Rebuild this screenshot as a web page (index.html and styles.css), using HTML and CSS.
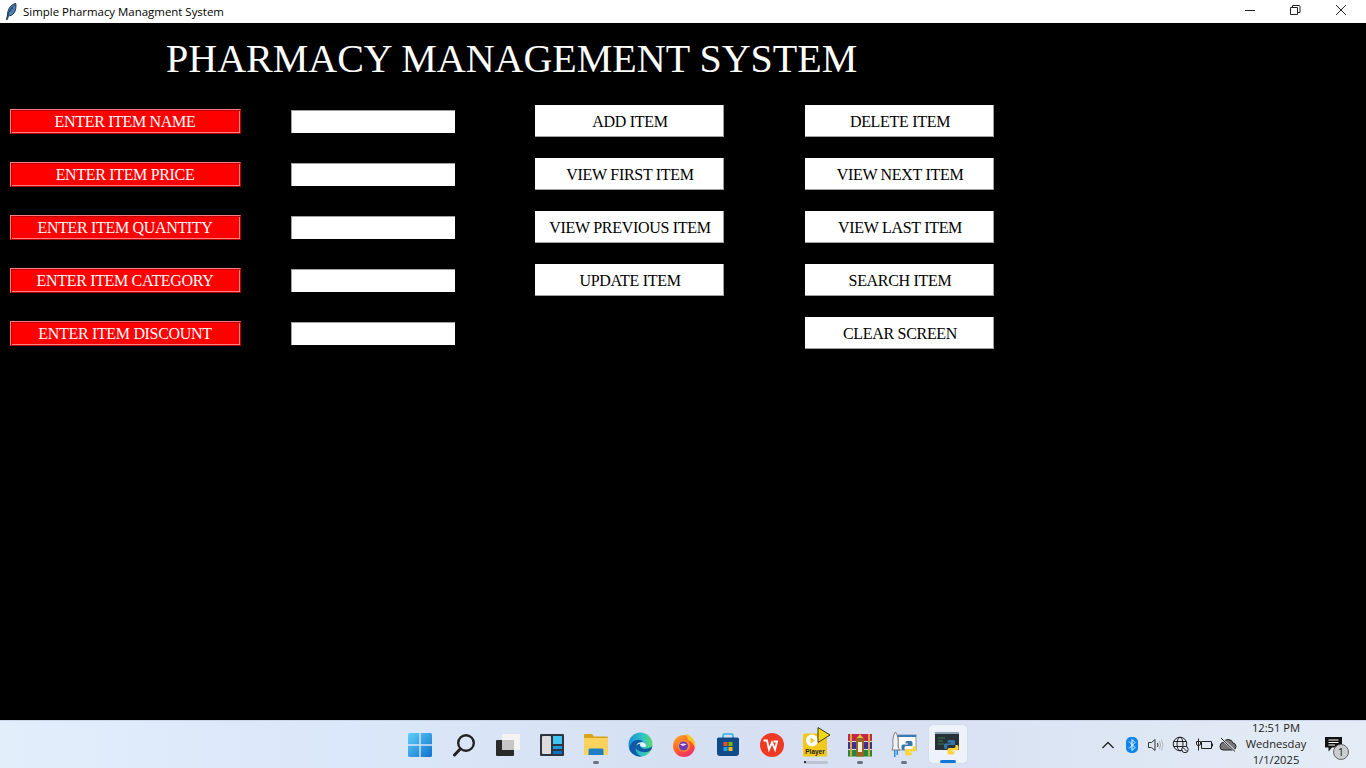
FILE: index.html
```html
<!DOCTYPE html>
<html lang="en">
<head>
    <meta charset="UTF-8">
    <title>Simple Pharmacy Managment System</title>
    <link rel="stylesheet" href="styles.css">
</head>
<body>
<div class="titlebar">
    <svg class="feather" width="12" height="17" viewBox="0 0 12 17">
        <path d="M1.500 16.500L2.500 12C2.500 8 4 4.500 6.500 2.500C8 1.200 9.500 .7 10.800 .5C11.300 4 10.800 7.500 9 10C7.500 12 5.500 13 3.500 12.800L2.300 16.500Z" fill="#4f86bd" stroke="#10233a" stroke-width=".9"/>
        <path d="M3 12.500C4 8.500 6 5 9.800 1.800M5 6.500L7 8.500M6.500 4.500L8.500 6.500" fill="none" stroke="#10233a" stroke-width=".7"/>
    </svg>
    <span class="titlebar-text">Simple Pharmacy Managment System</span>
    <div class="window-controls">
        <svg width="46" height="23" viewBox="0 0 46 23"><path d="M17 10.500H27" stroke="#222" fill="none"/></svg>
        <svg width="46" height="23" viewBox="0 0 46 23"><path d="M16.500 7.500H23.500V14.500H16.500Z M18.500 7.500V5.500H25Q26 5.500 26 6.500V12.500H23.500" stroke="#222" fill="none"/></svg>
        <svg width="46" height="23" viewBox="0 0 46 23"><path d="M16 5L26 15M26 5L16 15" stroke="#222" fill="none"/></svg>
    </div>
</div>

<main class="app">
    <h1 class="app-title">PHARMACY MANAGEMENT SYSTEM</h1>
    <form class="item-form">
        <label class="field-label">ENTER ITEM NAME</label>
        <input class="field-input" type="text">
        <button type="button" class="action-btn">ADD ITEM</button>
        <button type="button" class="action-btn">DELETE ITEM</button>

        <label class="field-label">ENTER ITEM PRICE</label>
        <input class="field-input" type="text">
        <button type="button" class="action-btn">VIEW FIRST ITEM</button>
        <button type="button" class="action-btn">VIEW NEXT ITEM</button>

        <label class="field-label">ENTER ITEM QUANTITY</label>
        <input class="field-input" type="text">
        <button type="button" class="action-btn">VIEW PREVIOUS ITEM</button>
        <button type="button" class="action-btn">VIEW LAST ITEM</button>

        <label class="field-label">ENTER ITEM CATEGORY</label>
        <input class="field-input" type="text">
        <button type="button" class="action-btn">UPDATE ITEM</button>
        <button type="button" class="action-btn">SEARCH ITEM</button>

        <label class="field-label">ENTER ITEM DISCOUNT</label>
        <input class="field-input" type="text">
        <span></span>
        <button type="button" class="action-btn">CLEAR SCREEN</button>
    </form>
</main>

<footer class="taskbar">
    <div class="taskbar-apps">
        <div class="task-slot">
            <svg width="24" height="24" viewBox="0 0 24 24">
                <defs>
                    <linearGradient id="winGrad" x1="0" y1="0" x2="1" y2="1"><stop offset="0" stop-color="#5fd0fb"/><stop offset="1" stop-color="#0f70cf"/></linearGradient>
                </defs>
                <path d="M0 1.500Q0 0 1.500 0H11.300V11.300H0Z M12.700 0H22.500Q24 0 24 1.500V11.300H12.700Z M0 12.700H11.300V24H1.500Q0 24 0 22.500Z M12.700 12.700H24V22.500Q24 24 22.500 24H12.700Z" fill="url(#winGrad)"/>
            </svg>
        </div>
        <div class="task-slot">
            <svg width="24" height="24" viewBox="0 0 24 24">
                <circle cx="14" cy="10" r="7.800" fill="none" stroke="#222" stroke-width="2.400"/>
                <path d="M8.200 16L2.500 22" stroke="#222" stroke-width="3" stroke-linecap="round"/>
            </svg>
        </div>
        <div class="task-slot">
            <svg width="24" height="24" viewBox="0 0 24 24">
                <rect x="6" y="1" width="18" height="16" fill="#f4f4f4"/>
                <rect x="0" y="7" width="18" height="16" rx="1" fill="#2a2a2a"/>
                <rect x="6" y="7" width="12" height="10" fill="#c6c6c6"/>
            </svg>
        </div>
        <div class="task-slot">
            <svg width="24" height="24" viewBox="0 0 24 24">
                <rect x="0" y="1" width="24" height="22" rx="1" fill="#2d3540"/>
                <rect x="2" y="3" width="9" height="18" rx="1" fill="#dcdcdc"/>
                <rect x="13" y="3" width="9" height="8" fill="#41c4f5"/>
                <rect x="13" y="13" width="9" height="3" fill="#1d9ae0"/>
                <rect x="13" y="18" width="9" height="3" fill="#0f6fc0"/>
            </svg>
        </div>
        <div class="task-slot">
            <svg width="26" height="24" viewBox="0 0 26 24">
                <path d="M1 2Q1 1 2 1H9L11 3.500H24Q25 3.500 25 4.500V8H1Z" fill="#d9a21b"/>
                <rect x="1" y="5" width="24" height="17" fill="#fbd35c"/>
                <path d="M5.500 22V17Q5.500 15.500 7 15.500H19Q20.500 15.500 20.500 17V22Z" fill="#1f7fc4"/>
            </svg>
            <i class="run-dot"></i>
        </div>
        <div class="task-slot">
            <svg width="25" height="25" viewBox="0 0 25 25">
                <defs>
                    <linearGradient id="edgeGrad" x1="0" y1="0" x2="1" y2="0"><stop offset="0" stop-color="#1d8fd6"/><stop offset=".6" stop-color="#30c3c6"/><stop offset="1" stop-color="#62d86a"/></linearGradient>
                </defs>
                <circle cx="12.500" cy="12.500" r="12" fill="url(#edgeGrad)"/>
                <path d="M24.500 14C21 17 15 18 12.500 15C11 13 12 10.500 15 10C13 7 8 7 4.500 10C2 12.500 1 15 1.500 18C4 23 10 25 14 24.500C9 23 7 19 8 16C10 20 18 22 23 18Z" fill="#0d5ba6"/>
                <path d="M8 14C9 10 14 9 17 11.500C19 13.500 18 15 16 15C13 15 11 13 12.500 11.500C10 12 8.500 13 8 14Z" fill="#e8f3fb"/>
            </svg>
        </div>
        <div class="task-slot">
            <svg width="24" height="24" viewBox="0 0 24 24">
                <defs>
                    <linearGradient id="foxGrad" x1="0" y1="0" x2=".6" y2="1"><stop offset="0" stop-color="#ffb21f"/><stop offset=".6" stop-color="#ff5a2c"/><stop offset="1" stop-color="#f0306a"/></linearGradient>
                </defs>
                <circle cx="12" cy="13" r="11" fill="url(#foxGrad)"/>
                <path d="M14 .5C20 3 24.500 9 23 15C22 11 19 8 16 7Z" fill="#ffc524"/>
                <path d="M6 8C9 5 14 6 17 9C18.500 12 18 16 15 18C12 19.500 8 18.500 6.500 16C5.500 13 5 10 6 8Z" fill="#ff8a2b"/>
                <circle cx="11.500" cy="13" r="4.500" fill="#6a3bb8"/>
                <path d="M8 11.500C10 10 13 10 14.500 11.500L11 13Z" fill="#f3d8ff"/>
            </svg>
        </div>
        <div class="task-slot">
            <svg width="24" height="24" viewBox="0 0 24 24">
                <path d="M7 5V2.500Q7 1 8.500 1H15.500Q17 1 17 2.500V5" fill="none" stroke="#2dade8" stroke-width="1.600"/>
                <path d="M1 6Q1 4.500 2.500 4.500H21.500Q23 4.500 23 6V20Q23 23 20 23H4Q1 23 1 20Z" fill="#114a8a"/>
                <rect x="7.500" y="9" width="4" height="4" fill="#f04f23"/>
                <rect x="12.500" y="9" width="4" height="4" fill="#7fba00"/>
                <rect x="7.500" y="14" width="4" height="4" fill="#20a4ef"/>
                <rect x="12.500" y="14" width="4" height="4" fill="#ffb900"/>
            </svg>
        </div>
        <div class="task-slot">
            <svg width="24" height="24" viewBox="0 0 24 24">
                <circle cx="12" cy="12" r="12" fill="#ee3a24"/>
                <path d="M3.500 7.500H7L9 16.500L12 9.500L15 16.500L17 8.500H13.500" fill="none" stroke="#fff" stroke-width="1.900"/>
            </svg>
        </div>
        <div class="task-slot">
            <svg width="30" height="36" viewBox="0 0 30 36">
                <rect x="2" y="6.500" width="24" height="23" rx="1.500" fill="#f2c81e"/>
                <circle cx="11" cy="13.500" r="6" fill="#fff"/>
                <path d="M9.500 10.500L14 13.500L9.500 16.500Z" fill="#f2c81e"/>
                <path d="M17 .5L29 8L17 15.500Z" fill="#f2d716" stroke="#3a3a1a" stroke-width="1"/>
                <text x="14" y="27" class="player-text">Player</text>
            </svg>
            <i class="run-dot run-dot-wide"></i>
        </div>
        <div class="task-slot">
            <svg width="24" height="24" viewBox="0 0 24 24">
                <rect x="0" y="1" width="24" height="7" fill="#c2274a"/>
                <rect x="0" y="9" width="24" height="7" fill="#3e2f9c"/>
                <rect x="0" y="17" width="24" height="6.500" fill="#1e8a3e"/>
                <rect x="2" y="1" width="2" height="22.500" fill="#d8a83a"/>
                <rect x="20" y="1" width="2" height="22.500" fill="#d8a83a"/>
                <rect x="8" y="4" width="8" height="19.500" fill="#9a6420"/>
                <rect x="10" y="9" width="4" height="10" fill="#f1ece0"/>
                <path d="M9 5L12 1L15 5Z" fill="#f0c040"/>
            </svg>
            <i class="run-dot"></i>
        </div>
        <div class="task-slot">
            <svg width="26" height="28" viewBox="0 0 26 28">
                <rect x="7" y="4" width="18" height="15" fill="#fff" stroke="#7d95ad"/>
                <rect x="7" y="4" width="18" height="2" fill="#3b7ab5"/>
                <path d="M4.500 1C7 4 7.500 9 7 15L8.500 19H1L2 15C1.500 9 2 4 4.500 1Z" fill="#f1f1f1" stroke="#666" stroke-width=".8"/>
                <rect x="3" y="19" width="1.500" height="7" fill="#2a8ae0"/>
                <rect x="5.500" y="19" width="1.500" height="5" fill="#2a8ae0"/>
                <path d="M16 10H20Q21.500 10 21.500 11.500V15H15Q13.500 15 13.500 16.500V19H12Q10.500 19 10.500 17V15Q10.500 13.500 12 13.500H17V12.500H14.500V11.500Q14.500 10 16 10Z" fill="#3776ab"/>
                <path d="M22 15H23.500Q25 15 25 17V19Q25 20.500 23.500 20.500H18.500V21.500H21V23Q21 24.500 19.500 24.500H15.500Q14 24.500 14 23V19.500Q14 18 15.500 18H20.500Q22 18 22 16.500Z" fill="#ffd43b"/>
            </svg>
            <i class="run-dot"></i>
        </div>
        <div class="task-slot task-active">
            <svg width="26" height="26" viewBox="0 0 26 26">
                <rect x="0" y="1" width="24" height="18" fill="#263238"/>
                <rect x="0" y="1" width="24" height="2" fill="#8ea2b5"/>
                <path d="M3 7H10M3 10H8M3 13H9" stroke="#3f7d4a" stroke-width="1.200"/>
                <path d="M14 9H18.500Q20 9 20 10.500V14H13.500Q12 14 12 15.500V18H10.500Q9 18 9 16V14Q9 12.500 10.500 12.500H15.500V11.500H12.500V10.500Q12.500 9 14 9Z" fill="#3776ab"/>
                <path d="M20.500 14H22Q23.500 14 23.500 16V18Q23.500 19.500 22 19.500H17V20.500H19.500V22Q19.500 23.500 18 23.500H14Q12.500 23.500 12.500 22V18.500Q12.500 17 14 17H19Q20.500 17 20.500 15.500Z" fill="#ffd43b"/>
            </svg>
            <i class="run-bar"></i>
        </div>
    </div>

    <div class="tray">
        <div class="tray-slot">
            <svg width="16" height="16" viewBox="0 0 16 16"><path d="M2.500 11L8 5.500L13.500 11" fill="none" stroke="#222" stroke-width="1.300"/></svg>
        </div>
        <div class="tray-slot">
            <svg width="12" height="16" viewBox="0 0 12 16">
                <rect x="0" y="0" width="12" height="16" rx="5" fill="#0a84f0"/>
                <path d="M3 4.500L9 10.500L6 13.500V2.500L9 5.500L3 11.500" fill="none" stroke="#fff"/>
            </svg>
        </div>
        <div class="tray-slot">
            <svg width="18" height="16" viewBox="0 0 18 16">
                <path d="M1.500 5.500H4.500L8 2.500V13.500L4.500 10.500H1.500Z" fill="none" stroke="#333"/>
                <path d="M10.500 6Q11.500 8 10.500 10" fill="none" stroke="#333"/>
                <path d="M12.500 4Q14.500 8 12.500 12" fill="none" stroke="#aaa"/>
                <path d="M14.500 2.500Q17.500 8 14.500 13.500" fill="none" stroke="#bbb"/>
            </svg>
        </div>
        <div class="tray-slot">
            <svg width="18" height="18" viewBox="0 0 18 18">
                <circle cx="9" cy="8" r="6.800" fill="none" stroke="#222"/>
                <ellipse cx="9" cy="8" rx="3" ry="6.800" fill="none" stroke="#222"/>
                <path d="M2.500 5.500H15.500M2.500 10.500H15.500" stroke="#222"/>
                <circle cx="14" cy="13.500" r="3.200" fill="#e3ecf6" stroke="#222"/>
                <path d="M12 11.500L16 15.500" stroke="#222"/>
            </svg>
        </div>
        <div class="tray-slot">
            <svg width="18" height="14" viewBox="0 0 18 14">
                <path d="M3.500 .5V12.500M1.500 3.500H5.500V6Q5.500 7.500 3.500 7.500Q1.500 7.500 1.500 6Z" fill="none" stroke="#222"/>
                <path d="M6.500 3.500H16.500V10.500H6.500Z" fill="none" stroke="#222"/>
                <path d="M17.500 5.500V8.500" stroke="#222"/>
            </svg>
        </div>
        <div class="tray-slot">
            <svg width="18" height="16" viewBox="0 0 18 16">
                <path d="M4 13H13Q17 13 17 9.500Q17 6.500 14 6Q13 2.500 9 2.500Q6 2.500 5 5Q1 5.500 1 9.500Q1 13 4 13Z" fill="#777" stroke="#222"/>
                <path d="M2.500 1.500L16 14" stroke="#e3ecf6" stroke-width="2"/>
                <path d="M2 1L16 14.500" stroke="#222"/>
            </svg>
        </div>
        <div class="clock">
            <span>12:51 PM</span>
            <span>Wednesday</span>
            <span>1/1/2025</span>
        </div>
        <div class="notify">
            <svg width="17" height="15" viewBox="0 0 17 15">
                <path d="M0 0H17V10.500H7L3.500 14.500V10.500H0Z" fill="#111"/>
                <path d="M3.500 3H13.500M3.500 5.500H13.500M3.500 8H10" stroke="#fff"/>
            </svg>
            <span class="notify-badge">1</span>
        </div>
    </div>
</footer>
</body>
</html>
```

FILE: styles.css
```css
* {
    box-sizing: border-box;
}

html, body {
    margin: 0;
    height: 100%;
}

body {
    width: 1366px;
    height: 768px;
    display: flex;
    flex-direction: column;
    overflow: hidden;
    background-color: #000;
}

/* window title bar */
.titlebar {
    height: 23px;
    display: flex;
    align-items: center;
    padding-left: 5px;
    background-color: #fff;
    position: relative;
}

.feather {
    flex: none;
}

.titlebar-text {
    margin-left: 6px;
    font-family: "Open Sans", sans-serif;
    font-size: 11.45px;
    color: #000;
}

.window-controls {
    margin-left: auto;
    display: flex;
    height: 23px;
}

.window-controls svg {
    display: block;
}

/* main app area */
.app {
    flex: 1;
    padding: 0 0 0 10px;
    background-color: #000;
}

.app-title {
    margin: 12px 0 0 156px;
    height: 47px;
    line-height: 47px;
    font-family: "Liberation Serif", "Times New Roman", serif;
    font-size: 40px;
    font-weight: normal;
    color: #fff;
}

.item-form {
    margin-top: 23px;
    display: grid;
    grid-template-columns: 281px 244px 270px 189px;
    grid-auto-rows: 32px;
    row-gap: 21px;
    align-items: center;
}

.field-label {
    width: 231px;
    height: 25px;
    padding: 1px 1px 0 0;
    display: flex;
    align-items: center;
    justify-content: center;
    background-color: #f00;
    border: 1px solid;
    border-color: #ff7f7f #b00000 #b00000 #ff7f7f;
    box-shadow: inset 1px 1px 0 #c00000, inset -1px -1px 0 #ff7f7f;
    font-family: "Liberation Serif", "Times New Roman", serif;
    font-size: 16px;
    letter-spacing: -0.33px;
    color: #fff;
}

.field-input {
    width: 164px;
    height: 23px;
    padding: 0;
    border: none;
    border-top: 1px solid #a0a0a0;
    border-left: 1px solid #a0a0a0;
    border-radius: 0;
    background-color: #fff;
    outline: none;
}

.action-btn {
    width: 189px;
    height: 32px;
    padding: 2px 0 0 2px;
    border: none;
    border-right: 1px solid #a0a0a0;
    border-bottom: 1px solid #a0a0a0;
    border-radius: 0;
    background-color: #fff;
    font-family: "Liberation Serif", "Times New Roman", serif;
    font-size: 16px;
    letter-spacing: -0.3px;
    color: #000;
}

/* windows taskbar */
.taskbar {
    height: 48px;
    display: grid;
    grid-template-columns: 1fr auto 1fr;
    align-items: center;
    border-top: 1px solid #c9d5e6;
    background: linear-gradient(90deg, #e2eefa 0%, #dbe7fa 25%, #d6e0f3 50%, #d8e2f2 70%, #e4edf6 100%);
    font-family: "Open Sans", sans-serif;
}

.taskbar-apps {
    grid-column: 2;
    display: flex;
    height: 47px;
    padding-left: 2px;
}

.task-slot {
    width: 44px;
    height: 47px;
    display: flex;
    align-items: center;
    justify-content: center;
    position: relative;
}

.task-slot svg {
    display: block;
}

.task-active {
    width: 38px;
    height: 38px;
    margin: 4px 3px 0;
    border-radius: 4px;
    background-color: #edf2fb;
    box-shadow: 0 0 1px rgba(0, 0, 0, 0.2);
}

.run-dot {
    position: absolute;
    left: 19px;
    bottom: 4px;
    width: 6px;
    height: 3px;
    border-radius: 2px;
    background-color: #6b7380;
}

.run-dot-wide {
    left: 10px;
    width: 24px;
    background-color: #bcc4d0;
}

.run-dot-wide::before {
    content: "";
    display: block;
    width: 2px;
    height: 2px;
    background-color: #333;
}

.run-bar {
    position: absolute;
    left: 11px;
    bottom: 0;
    width: 16px;
    height: 3px;
    border-radius: 2px;
    background-color: #0f78d4;
}

.player-text {
    font-family: "Liberation Sans", sans-serif;
    font-size: 6.500px;
    font-weight: bold;
    text-anchor: middle;
    fill: #222;
}

.tray {
    grid-column: 3;
    display: flex;
    align-items: center;
    justify-content: flex-end;
    height: 47px;
}

.tray-slot {
    flex: none;
    width: 24px;
    display: flex;
    justify-content: center;
}

.tray-slot svg {
    display: block;
}

.clock {
    width: 62px;
    margin: -1px 0 0 5px;
    display: flex;
    flex-direction: column;
    align-items: center;
    font-size: 11.2px;
    line-height: 16px;
    color: #222;
}

.notify {
    width: 22px;
    height: 30px;
    margin: 0 19px 0 18px;
    position: relative;
}

.notify svg {
    display: block;
    margin-top: 7px;
}

.notify-badge {
    position: absolute;
    left: 8px;
    top: 14px;
    width: 16px;
    height: 16px;
    border: 1px solid #666;
    border-radius: 50%;
    background-color: #c9ccd0;
    font-size: 11px;
    line-height: 14px;
    text-align: center;
    color: #222;
}
```
